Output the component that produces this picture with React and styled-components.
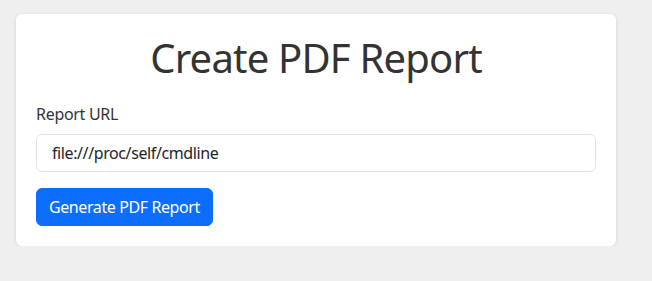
import React from "react"
import styled, { createGlobalStyle } from "styled-components"

const Global = createGlobalStyle`
  body {
    margin: 0;
    background: #efefef;
    font-family: "Noto Sans", "Open Sans", sans-serif;
    color: #212529;
  }
`

const Page = styled.main`
  padding: 14px 0 0 16px;
`

const Card = styled.section`
  width: 600px;
  box-sizing: border-box;
  background: #fff;
  border-radius: 6px;
  box-shadow: 0 1px 4px rgba(0, 0, 0, 0.12);
  padding: 20px;
`

const Title = styled.h1`
  margin: 0 0 20px;
  font-size: 40px;
  font-weight: 400;
  line-height: 48px;
  text-align: center;
  color: #333;
  letter-spacing: -0.8px;
`

const Label = styled.label`
  display: block;
  font-size: 16px;
  line-height: 24px;
  color: #333;
  letter-spacing: -0.3px;
  margin-bottom: 8px;
`

const Input = styled.input`
  display: block;
  width: 100%;
  box-sizing: border-box;
  height: 38px;
  padding: 6px 15px;
  font: inherit;
  font-size: 16px;
  letter-spacing: -0.4px;
  color: #212529;
  border: 1px solid #dee2e6;
  border-radius: 6px;
  outline: none;
  margin-bottom: 16px;
`

const Button = styled.button`
  height: 38px;
  padding: 6px 12px;
  font: inherit;
  font-size: 16px;
  letter-spacing: -0.4px;
  color: #fff;
  background: #0d6efd;
  border: 1px solid #0d6efd;
  border-radius: 6px;
  cursor: pointer;
`

export default function App() {
  return (
    <>
      <Global />
      <Page>
        <Card>
          <Title>Create PDF Report</Title>
          <Label htmlFor="url">Report URL</Label>
          <Input id="url" defaultValue="file:///proc/self/cmdline" />
          <Button>Generate PDF Report</Button>
        </Card>
      </Page>
    </>
  )
}
